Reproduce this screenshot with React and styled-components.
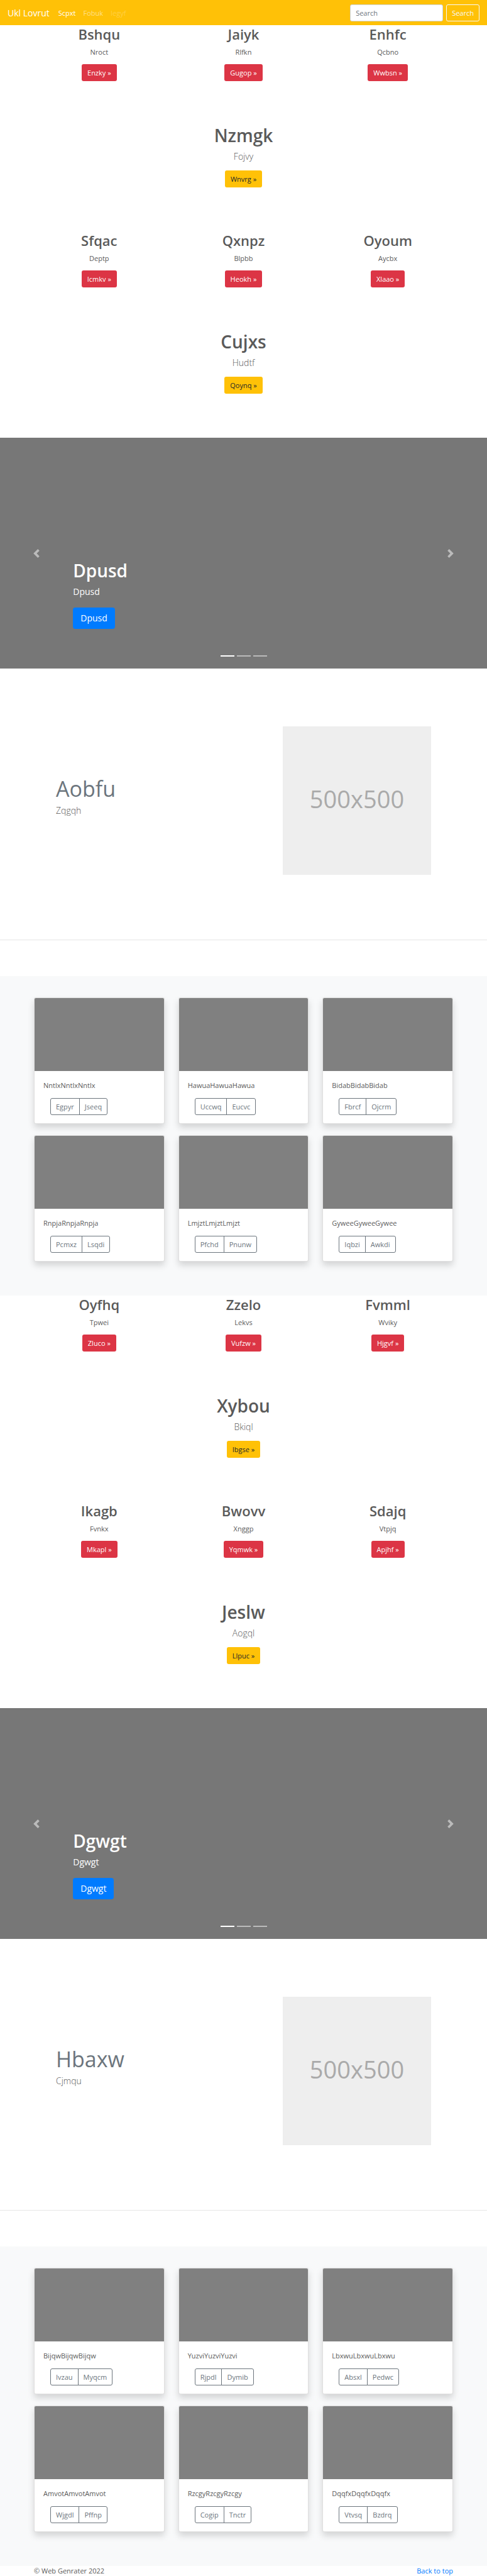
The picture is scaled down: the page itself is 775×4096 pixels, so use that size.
import React from "react";
import styled, { createGlobalStyle, css } from "styled-components";

const GlobalStyle = createGlobalStyle`
  *, *::before, *::after { box-sizing: border-box; }
  body {
    margin: 0;
    background: #fff;
    color: #5a5a5a;
    font-family: "Open Sans", "Noto Sans", sans-serif;
    font-size: 11px;
    line-height: 17px;
  }
  h1, h2, p { margin: 0; }
  a { text-decoration: none; }
  button, input { font: inherit; }
`;

const Container = styled.div`
  width: 100%;
  max-width: 689px;
  margin: 0 auto;
  padding: 0 11px;
`;

/* Navigation */

const Navbar = styled.header`
  display: flex;
  align-items: center;
  justify-content: space-between;
  height: 40px;
  padding: 0 12px;
  background: #ffc107;
`;

const NavStart = styled.nav`
  display: flex;
  align-items: center;
`;

const Brand = styled.a`
  margin-right: 14px;
  color: #fff;
  font-size: 14px;
`;

const NavLinks = styled.div`
  display: flex;
  gap: 12px;
`;

const NavLink = styled.a`
  color: rgba(255, 255, 255, ${({ $alpha }) => $alpha});
`;

const SearchForm = styled.form`
  display: flex;
  gap: 5px;
`;

const SearchInput = styled.input`
  width: 148px;
  height: 27px;
  padding: 0 8px;
  border: 1px solid #ced4da;
  border-radius: 3px;
  background: #fff;
  color: #495057;
  &::placeholder { color: #6c757d; opacity: 1; }
`;

const SearchButton = styled.button`
  height: 27px;
  padding: 0 8px;
  border: 1px solid #f8f9fa;
  border-radius: 3px;
  background: transparent;
  color: #f8f9fa;
`;

/* Headings, text and link buttons */

const Heading = styled.h2`
  margin-bottom: 6px;
  font-weight: 600;
  font-size: 22px;
  line-height: 28px;
`;

const Title = styled.h1`
  margin-bottom: 5px;
  font-weight: 600;
  font-size: 28px;
  line-height: 36px;
`;

const Text = styled.p`
  margin-bottom: 11px;
`;

const Lead = styled.p`
  margin-bottom: 11px;
  font-weight: 300;
  font-size: 14px;
  line-height: 22px;
`;

const tones = {
  danger: css`background: #dc3545; color: #fff;`,
  warning: css`background: #ffc107; color: #212529;`,
  primary: css`background: #007bff; color: #fff;`,
};

const ButtonLink = styled.a`
  display: inline-block;
  padding: 5px 9px;
  border-radius: 3px;
  vertical-align: top;
  ${({ $tone }) => tones[$tone]}
`;

const LargeButtonLink = styled(ButtonLink)`
  padding: 6px 12px;
  border-radius: 4px;
  font-size: 14px;
  line-height: 22px;
`;

/* Three columns followed by a centred call to action */

const Columns = styled.div`
  display: grid;
  grid-template-columns: repeat(3, 1fr);
  gap: 18px 22px;
`;

const Column = styled.div`
  padding-bottom: 28px;
  text-align: center;
`;

const Hero = styled.section`
  padding: 40px 0 70px;
  text-align: center;
`;

/* Carousel */

const CarouselFrame = styled.section`
  position: relative;
  display: grid;
  grid-template-columns: 15% 1fr 15%;
  min-height: 367px;
  background: #777;
  color: #fff;
`;

const CarouselControl = styled.button`
  display: flex;
  align-items: center;
  justify-content: center;
  padding: 0;
  border: 0;
  background: transparent;
  color: #fff;
  opacity: 0.5;
`;

const Caption = styled.div`
  align-self: end;
  padding-bottom: 63px;
`;

const CaptionText = styled.p`
  margin-bottom: 14px;
  font-size: 14px;
  line-height: 22px;
`;

const Indicators = styled.div`
  position: absolute;
  right: 0;
  bottom: 19px;
  left: 0;
  display: flex;
  justify-content: center;
  gap: 4px;
`;

const Indicator = styled.button`
  width: 22px;
  height: 2px;
  padding: 0;
  border: 0;
  background: #fff;
  opacity: ${({ $active }) => ($active ? 1 : 0.5)};
`;

/* Featurette */

const FeatureSection = styled.section`
  padding-bottom: 57px;
`;

const FeatureRow = styled.div`
  display: flex;
  align-items: center;
  justify-content: space-between;
  max-width: 689px;
  margin: 0 auto;
  padding: 92px 46px 103px;
`;

const FeatureTitle = styled.h2`
  margin-bottom: 6px;
  color: #6c757d;
  font-weight: 400;
  font-size: 34px;
  line-height: 36px;
`;

const Placeholder = styled.div`
  display: flex;
  align-items: center;
  justify-content: center;
  width: 236px;
  height: 236px;
  padding-bottom: 6px;
  background: #eee;
  color: #aaa;
  font-size: 38px;
  line-height: 48px;
`;

const Divider = styled.hr`
  margin: 0;
  border: 0;
  border-top: 1px solid #e6e6e6;
`;

/* Album */

const Album = styled.section`
  padding: 34px 0 54px;
  background: #f8f9fa;
`;

const Card = styled.article`
  overflow: hidden;
  border: 1px solid rgba(0, 0, 0, 0.125);
  border-radius: 3px;
  background: #fff;
  background-clip: border-box;
  box-shadow: 0 6px 11px rgba(0, 0, 0, 0.15);
`;

const CardImage = styled.div`
  height: 116px;
  background: #808080;
`;

const CardBody = styled.div`
  padding: 14px 14px 13px;
`;

const CardText = styled.p`
  margin-bottom: 12px;
`;

const ButtonGroup = styled.div`
  display: flex;
  margin-left: 11px;
`;

const GroupButton = styled.button`
  height: 27px;
  padding: 0 8px;
  border: 1px solid #6c757d;
  border-radius: 3px;
  background: transparent;
  color: #6c757d;
  &:first-child { border-top-right-radius: 0; border-bottom-right-radius: 0; }
  &:last-child {
    margin-left: -1px;
    border-top-left-radius: 0;
    border-bottom-left-radius: 0;
  }
`;

/* Footer */

const FooterRow = styled.footer`
  display: flex;
  justify-content: space-between;
  line-height: 16px;
`;

const TopLink = styled.a`
  color: #007bff;
`;

const halves = [
  {
    groups: [
      {
        columns: [["Bshqu", "Nroct", "Enzky"], ["Jaiyk", "Rlfkn", "Gugop"], ["Enhfc", "Qcbno", "Wwbsn"]],
        hero: ["Nzmgk", "Fojvy", "Wnvrg"],
      },
      {
        columns: [["Sfqac", "Deptp", "Icmkv"], ["Qxnpz", "Blpbb", "Heokh"], ["Oyoum", "Aycbx", "Xlaao"]],
        hero: ["Cujxs", "Hudtf", "Qoynq"],
      },
    ],
    slide: "Dpusd",
    feature: ["Aobfu", "Zqgqh"],
    cards: [
      ["Nntlx", "Egpyr", "Jseeq"],
      ["Hawua", "Uccwq", "Eucvc"],
      ["Bidab", "Fbrcf", "Ojcrm"],
      ["Rnpja", "Pcmxz", "Lsqdi"],
      ["Lmjzt", "Pfchd", "Pnunw"],
      ["Gywee", "Iqbzi", "Awkdi"],
    ],
  },
  {
    groups: [
      {
        columns: [["Oyfhq", "Tpwei", "Zluco"], ["Zzelo", "Lekvs", "Vufzw"], ["Fvmml", "Wviky", "Hjgvf"]],
        hero: ["Xybou", "Bkiql", "Ibgse"],
      },
      {
        columns: [["Ikagb", "Fvnkx", "Mkapl"], ["Bwovv", "Xnggp", "Yqmwk"], ["Sdajq", "Vtpjq", "Apjhf"]],
        hero: ["Jeslw", "Aogql", "Llpuc"],
      },
    ],
    slide: "Dgwgt",
    feature: ["Hbaxw", "Cjmqu"],
    cards: [
      ["Bijqw", "Ivzau", "Myqcm"],
      ["Yuzvi", "Rjpdl", "Dymib"],
      ["Lbxwu", "Absxl", "Pedwc"],
      ["Amvot", "Wjgdl", "Pffnp"],
      ["Rzcgy", "Cogip", "Tnctr"],
      ["Dqqfx", "Vtvsq", "Bzdrq"],
    ],
  },
];

function Group({ columns, hero }) {
  const [title, lead, action] = hero;
  return (
    <Container>
      <Columns>
        {columns.map(([heading, text, label]) => (
          <Column key={heading}>
            <Heading>{heading}</Heading>
            <Text>{text}</Text>
            <ButtonLink href="#" $tone="danger">{label} »</ButtonLink>
          </Column>
        ))}
      </Columns>
      <Hero>
        <Title>{title}</Title>
        <Lead>{lead}</Lead>
        <ButtonLink href="#" $tone="warning">{action} »</ButtonLink>
      </Hero>
    </Container>
  );
}

function Carousel({ label }) {
  return (
    <CarouselFrame>
      <CarouselControl type="button" aria-label="Previous">
        <svg width="14" height="14" viewBox="0 0 8 8" fill="currentColor">
          <path d="M5.25 0l-4 4 4 4 1.5-1.5-2.5-2.5 2.5-2.5-1.5-1.5z" />
        </svg>
      </CarouselControl>
      <Caption>
        <Title>{label}</Title>
        <CaptionText>{label}</CaptionText>
        <LargeButtonLink href="#" $tone="primary">{label}</LargeButtonLink>
      </Caption>
      <CarouselControl type="button" aria-label="Next">
        <svg width="14" height="14" viewBox="0 0 8 8" fill="currentColor">
          <path d="M2.75 0l-1.5 1.5 2.5 2.5-2.5 2.5 1.5 1.5 4-4-4-4z" />
        </svg>
      </CarouselControl>
      <Indicators>
        {[1, 2, 3].map((n) => (
          <Indicator key={n} type="button" aria-label={`Slide ${n}`} $active={n === 1} />
        ))}
      </Indicators>
    </CarouselFrame>
  );
}

function Featurette({ title, text }) {
  return (
    <FeatureSection>
      <FeatureRow>
        <div>
          <FeatureTitle>{title}</FeatureTitle>
          <Lead>{text}</Lead>
        </div>
        <Placeholder>500x500</Placeholder>
      </FeatureRow>
      <Divider />
    </FeatureSection>
  );
}

function CardAlbum({ cards }) {
  return (
    <Album>
      <Container>
        <Columns>
          {cards.map(([name, first, second]) => (
            <Card key={name}>
              <CardImage />
              <CardBody>
                <CardText>{name.repeat(3)}</CardText>
                <ButtonGroup>
                  <GroupButton type="button">{first}</GroupButton>
                  <GroupButton type="button">{second}</GroupButton>
                </ButtonGroup>
              </CardBody>
            </Card>
          ))}
        </Columns>
      </Container>
    </Album>
  );
}

export default function App() {
  return (
    <>
      <GlobalStyle />
      <Navbar id="top">
        <NavStart>
          <Brand href="#">Ukl Lovrut</Brand>
          <NavLinks>
            <NavLink href="#" $alpha={1}>Scpxt</NavLink>
            <NavLink href="#" $alpha={0.5}>Fobuk</NavLink>
            <NavLink href="#" $alpha={0.25}>Iegyf</NavLink>
          </NavLinks>
        </NavStart>
        <SearchForm role="search">
          <SearchInput type="search" placeholder="Search" aria-label="Search" />
          <SearchButton type="button">Search</SearchButton>
        </SearchForm>
      </Navbar>
      <main>
        {halves.map(({ groups, slide, feature, cards }) => (
          <React.Fragment key={slide}>
            {groups.map((group) => (
              <Group key={group.hero[0]} {...group} />
            ))}
            <Carousel label={slide} />
            <Featurette title={feature[0]} text={feature[1]} />
            <CardAlbum cards={cards} />
          </React.Fragment>
        ))}
      </main>
      <Container>
        <FooterRow>
          <span>© Web Genrater 2022</span>
          <TopLink href="#top">Back to top</TopLink>
        </FooterRow>
      </Container>
    </>
  );
}
